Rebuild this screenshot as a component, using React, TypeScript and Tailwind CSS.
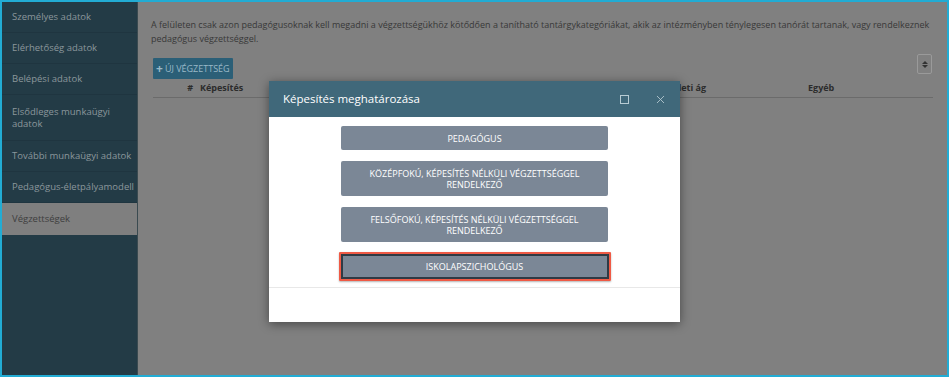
import { X } from "lucide-react";

const menu = [
  "Személyes adatok",
  "Elérhetőség adatok",
  "Belépési adatok",
  "Elsődleges munkaügyi\nadatok",
  "További munkaügyi adatok",
  "Pedagógus-életpályamodell",
];

const choices = [
  "Pedagógus",
  "Középfokú, képesítés nélküli végzettséggel rendelkező",
  "Felsőfokú, képesítés nélküli végzettséggel rendelkező",
];

export default function App() {
  return (
    <div
      className="w-[949px] h-[377px] border-2 border-[#22acd4] bg-[#808080] overflow-hidden relative"
      style={{ fontFamily: '"Open Sans", "Liberation Sans", sans-serif' }}
    >
      <div className="flex h-full">
        {/* Sidebar (dimmed) */}
        <div className="w-[136px] h-full bg-[#233b46] border-r border-[#3a4a50] shrink-0">
          {menu.map((m, i) => (
            <div
              key={m}
              className={`flex items-center pl-[10px] border-b border-[#1f3540] text-[9.5px] leading-[12px] text-[#8b979c] whitespace-pre-line ${
                i === 3 ? "h-[46px]" : "h-[31px]"
              }`}
            >
              {m}
            </div>
          ))}
          <div className="flex items-center pl-[10px] h-[32px] bg-[#7f7f7f] text-[9.5px] text-[#3e3e3e]">
            Végzettségek
          </div>
        </div>

        {/* Main content (dimmed) */}
        <div className="flex-1 pl-[13px] pr-[14px] pt-[16px]">
          <p className="text-[9px] leading-[14px] text-[#383838] whitespace-nowrap">
            A felületen csak azon pedagógusoknak kell megadni a végzettségükhöz kötődően a tanítható tantárgykategóriákat, akik az intézményben ténylegesen tanórát tartanak, vagy rendelkeznek
            <br />
            pedagógus végzettséggel.
          </p>

          <div className="flex items-start justify-between mt-[12px] pl-[2px]">
            <div className="flex items-center gap-[2px] h-[21px] pl-[3px] pr-[3px] bg-[#2b5f77] text-[#9ab9c8] text-[9px] rounded-[1px]">
              <span className="text-[12px] font-bold leading-none">+</span>
              ÚJ VÉGZETTSÉG
            </div>
            <div className="-mt-[4px] w-[15px] h-[20px] border border-[#9a9a9a] rounded-[2px] flex flex-col items-center justify-center gap-[1px] mr-[1px]">
              <span className="block w-0 h-0 border-l-[3px] border-r-[3px] border-b-[3px] border-l-transparent border-r-transparent border-b-[#333]" />
              <span className="block w-0 h-0 border-l-[3px] border-r-[3px] border-t-[3px] border-l-transparent border-r-transparent border-t-[#333]" />
            </div>
          </div>

          <div className="flex items-center h-[19px] ml-[2px] border-b border-[#6b6b6b] text-[9px] font-bold text-[#2c2c2c]">
            <span className="w-[40px] text-right">#</span>
            <span className="w-[367px] pl-[7px]">Képesítés</span>
            <span className="w-[146px] text-right">Szakterületi ág</span>
            <span className="w-[102px]" />
            <span className="w-[125px]">Egyéb</span>
          </div>
        </div>
      </div>

      {/* Modal */}
      <div className="absolute left-[267px] top-[79px] w-[411px] bg-white shadow-[0_2px_10px_rgba(0,0,0,0.45)]">
        <div className="flex items-center h-[36px] bg-[#40687a] pl-[14px] pr-[13px]">
          <span className="flex-1 text-[11.5px] text-white">Képesítés meghatározása</span>
          <span className="w-[9px] h-[9px] border-[1.5px] border-[#b7cbd3] mr-[25px]" />
          <X size={13} strokeWidth={1.6} color="#b7cbd3" />
        </div>
        <div className="flex flex-col items-center pt-[9px] pb-[6px] gap-[11px]">
          {choices.map((c, i) => (
            <div
              key={c}
              className={`w-[267px] flex items-center justify-center text-center px-[8px] bg-[#7b8796] text-white text-[9px] uppercase leading-[11px] rounded-[2px] ${
                i === 0 ? "h-[24px]" : "h-[35px]"
              }`}
            >
              <span className="max-w-[215px]">{c}</span>
            </div>
          ))}
          <div className="w-[272px] h-[29px] border-2 border-[#ef5a45] rounded-[1px] shadow-[0_1px_2px_rgba(0,0,0,0.3)] -mt-[1px]">
            <div className="w-full h-full flex items-center justify-center bg-[#7b8796] border-2 border-[#2f3a44] text-white text-[9px] uppercase">
              Iskolapszichológus
            </div>
          </div>
        </div>
        <div className="h-[35px] border-t border-[#e8e8e8]" />
      </div>
    </div>
  );
}
